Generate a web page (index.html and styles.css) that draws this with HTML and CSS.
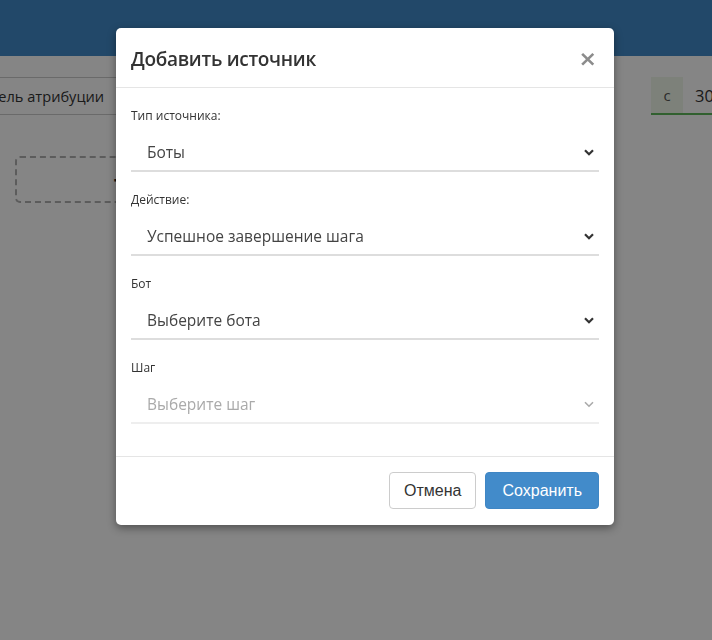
FILE: index.html
```html
<!DOCTYPE html>
<html lang="ru">
<head>
<meta charset="utf-8">
<title>Добавить источник</title>
<link rel="stylesheet" href="styles.css">
</head>
<body>
<div class="page">
  <header class="topbar"></header>
  <div class="toolbar">
    <div class="model-box">Модель атрибуции</div>
    <div class="date-group">
      <span class="addon">с</span>
      <span class="date-input">30.01.2024</span>
    </div>
  </div>
  <div class="add-area">
    <div class="add-box"><span class="plus">+</span></div>
  </div>
</div>
<div class="backdrop"></div>
<div class="modal">
  <div class="modal-header">
    <h4 class="modal-title">Добавить источник</h4>
    <span class="close">×</span>
  </div>
  <div class="modal-body">
    <div class="group">
      <div class="label">Тип источника:</div>
      <div class="select"><span>Боты</span><svg class="chev" width="10" height="7" viewBox="0 0 10 7"><polyline points="1,1.2 5,5.2 9,1.2" fill="none" stroke="currentColor" stroke-width="2.2"/></svg></div>
    </div>
    <div class="group">
      <div class="label">Действие:</div>
      <div class="select"><span>Успешное завершение шага</span><svg class="chev" width="10" height="7" viewBox="0 0 10 7"><polyline points="1,1.2 5,5.2 9,1.2" fill="none" stroke="currentColor" stroke-width="2.2"/></svg></div>
    </div>
    <div class="group">
      <div class="label">Бот</div>
      <div class="select"><span>Выберите бота</span><svg class="chev" width="10" height="7" viewBox="0 0 10 7"><polyline points="1,1.2 5,5.2 9,1.2" fill="none" stroke="currentColor" stroke-width="2.2"/></svg></div>
    </div>
    <div class="group">
      <div class="label">Шаг</div>
      <div class="select disabled"><span>Выберите шаг</span><svg class="chev" width="10" height="7" viewBox="0 0 10 7"><polyline points="1,1.2 5,5.2 9,1.2" fill="none" stroke="currentColor" stroke-width="1.6"/></svg></div>
    </div>
  </div>
  <div class="modal-footer">
    <button class="btn btn-default">Отмена</button>
    <button class="btn btn-primary">Сохранить</button>
  </div>
</div>
</body>
</html>
```

FILE: styles.css
```css
html, body {
  margin: 0;
  padding: 0;
  width: 712px;
  height: 640px;
  overflow: hidden;
  background: #fff;
  font-family: "Open Sans", "Noto Sans", sans-serif;
  color: #333;
}
.page {
  width: 712px;
  height: 640px;
  overflow: hidden;
}
.topbar {
  height: 56px;
  background: #428bca;
}
.toolbar {
  display: flex;
  justify-content: space-between;
  margin-top: 21px;
}
.model-box {
  margin-left: -42px;
  width: 152px;
  height: 36px;
  border-top: 1px solid #ccc;
  border-bottom: 1px solid #ccc;
  display: flex;
  align-items: center;
  font-size: 14.6px;
  padding-left: 10px;
  white-space: nowrap;
}
.date-group {
  display: flex;
  width: 61px;
  height: 36px;
  border-bottom: 2px solid #5fb85a;
  overflow: hidden;
  white-space: nowrap;
}
.addon {
  flex: 0 0 32px;
  background: #f0f8ea;
  display: flex;
  align-items: center;
  justify-content: center;
  font-size: 15px;
  color: #555;
}
.date-input {
  padding-left: 12px;
  display: flex;
  align-items: center;
  font-size: 16.5px;
  color: #333;
}
.add-area {
  padding: 41px 0 0 15px;
}
.add-box {
  width: 206px;
  height: 43px;
  border: 2px dashed #b0b0b0;
  border-radius: 5px;
  display: flex;
  align-items: center;
  justify-content: center;
}
.plus {
  font-size: 24px;
  font-weight: bold;
  color: #222;
}
.backdrop {
  position: fixed;
  inset: 0;
  background: rgba(0, 0, 0, 0.48);
}
.modal {
  position: absolute;
  top: 28px;
  left: 116px;
  width: 498px;
  background: #fff;
  border-radius: 5px;
  box-shadow: 0 3px 9px rgba(0, 0, 0, 0.4);
}
.modal-header {
  height: 59px;
  border-bottom: 1px solid #e5e5e5;
  display: flex;
  align-items: center;
  justify-content: space-between;
  padding: 0 17px 0 15px;
}
.modal-title {
  margin: 0;
  font-size: 19px;
  font-weight: 600;
  color: #333;
  letter-spacing: -0.3px;
  padding-top: 2px;
}
.close {
  font-family: "DejaVu Sans", sans-serif;
  font-size: 22px;
  font-weight: bold;
  color: #8c8c8c;
  line-height: 1;
  padding-top: 3px;
}
.modal-body {
  padding: 18px 15px 14px;
}
.group {
  margin-bottom: 18px;
}
.label {
  font-size: 12px;
  line-height: 20px;
  margin-bottom: 8px;
  color: #333;
}
.select {
  height: 36px;
  border-bottom: 2px solid #ddd;
  display: flex;
  align-items: center;
  justify-content: space-between;
  padding: 0 5px 0 16px;
  font-size: 15.5px;
  color: #444;
}
.chev {
  color: #333;
  display: block;
}
.select.disabled {
  color: #aaa;
  border-bottom-color: #eee;
}
.select.disabled .chev {
  color: #aaa;
}
.modal-footer {
  border-top: 1px solid #e5e5e5;
  padding: 15px 15px 16px;
  display: flex;
  justify-content: flex-end;
  gap: 9px;
}
.btn {
  height: 37px;
  padding: 0 16px;
  border-radius: 4px;
  font-family: "Liberation Sans", Arial, sans-serif;
  font-size: 16px;
  cursor: pointer;
}
.btn-default {
  padding: 0 14px;
  background: #fff;
  border: 1px solid #ccc;
  color: #333;
}
.btn-primary {
  background: #428bca;
  border: 1px solid #3f86c4;
  color: #fff;
}
```
